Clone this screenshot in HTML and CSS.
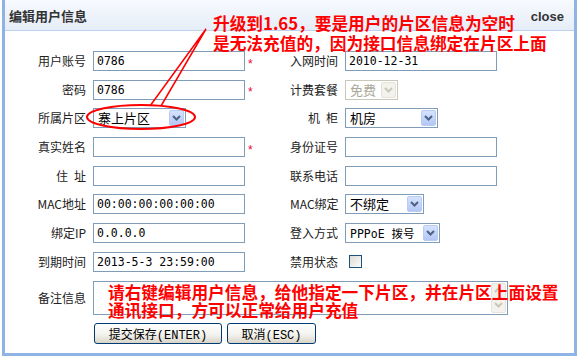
FILE: index.html
```html
<!DOCTYPE html>
<html lang="zh-CN">

<head>
  <meta charset="UTF-8">
  <meta name="viewport" content="width=device-width, initial-scale=1.0">
  <link rel="stylesheet" href="styles.css">
  <title>编辑用户信息</title>
</head>

<body>
  <div class="page">
    <div class="dialog">
      <div class="dialog-title">
        <b>编辑用户信息</b>
        <span class="close">close</span>
      </div>

      <form class="user-form">
        <!-- row: account / join date -->
        <label>用户账号</label>
        <input type="text" class="field" value="0786">
        <span class="star">*</span>
        <label>入网时间</label>
        <input type="text" class="field" value="2010-12-31">

        <!-- row: password / plan -->
        <label>密码</label>
        <input type="text" class="field" value="0786">
        <span class="star">*</span>
        <label>计费套餐</label>
        <div class="select select-plan disabled">
          <span class="value">免费</span>
          <span class="drop"><svg width="9" height="6" viewBox="0 0 9 6"><path d="M1 1 L4.5 4.5 L8 1" /></svg></span>
        </div>

        <!-- row: area / rack -->
        <label>所属片区</label>
        <div class="select select-area">
          <span class="value">寨上片区</span>
          <span class="drop"><svg width="9" height="6" viewBox="0 0 9 6"><path d="M1 1 L4.5 4.5 L8 1" /></svg></span>
        </div>
        <span></span>
        <label>机&ensp;柜</label>
        <div class="select select-rack">
          <span class="value">机房</span>
          <span class="drop"><svg width="9" height="6" viewBox="0 0 9 6"><path d="M1 1 L4.5 4.5 L8 1" /></svg></span>
        </div>

        <!-- row: real name / id -->
        <label>真实姓名</label>
        <input type="text" class="field" value="">
        <span class="star">*</span>
        <label>身份证号</label>
        <input type="text" class="field" value="">

        <!-- row: address / phone -->
        <label>住&ensp;址</label>
        <input type="text" class="field" value="">
        <span></span>
        <label>联系电话</label>
        <input type="text" class="field" value="">

        <!-- row: mac -->
        <label>MAC地址</label>
        <input type="text" class="field" value="00:00:00:00:00:00">
        <span></span>
        <label>MAC绑定</label>
        <div class="select select-bind">
          <span class="value">不绑定</span>
          <span class="drop"><svg width="9" height="6" viewBox="0 0 9 6"><path d="M1 1 L4.5 4.5 L8 1" /></svg></span>
        </div>

        <!-- row: ip / login type -->
        <label>绑定IP</label>
        <input type="text" class="field" value="0.0.0.0">
        <span></span>
        <label>登入方式</label>
        <div class="select select-login">
          <span class="value mono">PPPoE 拨号</span>
          <span class="drop"><svg width="9" height="6" viewBox="0 0 9 6"><path d="M1 1 L4.5 4.5 L8 1" /></svg></span>
        </div>

        <!-- row: expire / disabled -->
        <label>到期时间</label>
        <input type="text" class="field" value="2013-5-3 23:59:00">
        <span></span>
        <label>禁用状态</label>
        <span class="check"></span>

        <!-- memo -->
        <label>备注信息</label>
        <div class="memo">
          <div class="scroll">
            <span class="arrow"><svg width="9" height="6" viewBox="0 0 9 6"><path d="M1 5 L4.5 1.5 L8 5" /></svg></span>
            <span class="arrow"><svg width="9" height="6" viewBox="0 0 9 6"><path d="M1 1 L4.5 4.5 L8 1" /></svg></span>
          </div>
        </div>

        <span></span>
        <div class="actions">
          <button type="submit" class="btn btn-save">提交保存(ENTER)</button>
          <button type="button" class="btn btn-cancel">取消(ESC)</button>
        </div>
      </form>
    </div>

    <!-- red notes drawn over the dialog -->
    <div class="note note-top">升级到1.65，要是用户的片区信息为空时<br>是无法充值的，因为接口信息绑定在片区上面</div>
    <div class="note note-bottom">请右键编辑用户信息，给他指定一下片区，并在片区上面设置<br>通讯接口，方可以正常给用户充值</div>

    <svg class="callout" width="579" height="357" viewBox="0 0 579 357">
      <ellipse cx="141" cy="117" rx="54" ry="12" />
      <path d="M150 106 L206 29 L161 106" />
    </svg>
  </div>
</body>

</html>
```

FILE: styles.css
```css
body {
  margin: 0;
  background-color: #fff;
  font-family: "Noto Sans CJK SC", sans-serif;
}

.page {
  position: relative;
  width: 579px;
  height: 357px;
  overflow: hidden;
}

.dialog {
  margin-left: 2px;
  width: 575px;
  height: 356px;
  box-sizing: border-box;
  border: 3px solid #8fb3e5;
  border-top: 0;
  background-color: #fff;
}

.dialog-title {
  height: 30px;
  border-bottom: 1px solid #bcd2ef;
  background: linear-gradient(#f7fafe, #e5edf8);
  display: flex;
  align-items: center;
  justify-content: space-between;
  padding: 0 10px 0 4px;
}

.dialog-title b {
  font-size: 13px;
  color: #333;
}

.close {
  font: bold 13px "Liberation Sans", Arial, sans-serif;
  color: #333;
  margin-top: 2px;
}

.user-form {
  display: grid;
  grid-template-columns: 83px 152px 45px 55px 1fr;
  row-gap: 8.7px;
  align-items: center;
  padding: 20px 0 0 5px;
}

.user-form label {
  font-size: 12px;
  line-height: 20px;
  color: #222;
  text-align: right;
  padding-right: 7px;
  white-space: nowrap;
}

.field {
  width: 152px;
  height: 20px;
  box-sizing: border-box;
  margin: 0;
  padding: 0 3px;
  border: 1px solid #7f9db9;
  background-color: #fff;
  font: 11.5px "DejaVu Sans Mono", monospace;
  color: #000;
  outline: none;
}

.star {
  color: #f0003c;
  font: 12px "Liberation Sans", sans-serif;
  line-height: 12px;
  padding: 5px 0 0 3px;
}

.select {
  justify-self: start;
  display: flex;
  align-items: center;
  height: 20px;
  box-sizing: border-box;
  padding: 1px;
  border: 1px solid #7f9db9;
  background-color: #fff;
}

.select .value {
  flex: 1;
  padding-left: 3px;
  font-size: 13px;
  line-height: 16px;
  white-space: nowrap;
}

.select .value.mono {
  font: 11.5px "DejaVu Sans Mono", "Noto Sans CJK SC", monospace;
}

.select .drop {
  width: 15px;
  height: 16px;
  box-sizing: border-box;
  border: 1px solid #b9cbf3;
  border-radius: 2px;
  background: linear-gradient(#d6e3fe, #b3c7f5);
  display: flex;
  align-items: center;
  justify-content: center;
}

.select svg path,
.scroll svg path {
  fill: none;
  stroke: #4d6185;
  stroke-width: 2;
}

.select-area,
.select-rack {
  width: 93px;
}

.select-plan {
  width: 53px;
}

.select-bind {
  width: 79px;
}

.select-login {
  width: 95px;
}

.select.disabled {
  border-color: #c9c7ba;
}

.select.disabled .value {
  color: #aca899;
}

.select.disabled .drop {
  border-color: #e3e1d8;
  background: #f3f2ec;
}

.select.disabled svg path {
  stroke: #c9c7ba;
}

.check {
  justify-self: start;
  width: 13px;
  height: 13px;
  box-sizing: border-box;
  margin-left: 4px;
  border: 1px solid #1c5180;
  background: linear-gradient(135deg, #dcdcd7, #fbfbfa);
}

.memo {
  grid-column: 2 / 6;
  width: 415px;
  height: 34px;
  box-sizing: border-box;
  padding: 1px;
  border: 1px solid #7f9db9;
  display: flex;
  justify-content: flex-end;
}

.scroll {
  width: 15px;
  display: flex;
  flex-direction: column;
  justify-content: space-between;
}

.scroll .arrow {
  height: 15px;
  box-sizing: border-box;
  border: 1px solid #e6e4da;
  border-radius: 2px;
  background: #f3f2ec;
  display: flex;
  align-items: center;
  justify-content: center;
}

.scroll svg path {
  stroke: #c9c7ba;
}

.actions {
  grid-column: 2 / 6;
  display: flex;
  gap: 5px;
  padding-left: 1px;
}

.btn {
  height: 21px;
  padding: 0;
  border: 1px solid #003c74;
  border-radius: 3px;
  background: linear-gradient(#fff, #f3f3ee 55%, #d9d4c8);
  font: 12px "Liberation Mono", "Noto Sans CJK SC", monospace;
  color: #000;
}

.btn-save {
  width: 128px;
}

.btn-cancel {
  width: 89px;
}

.note {
  position: absolute;
  color: #f00;
  font-weight: bold;
  font-size: 16.7px;
  white-space: nowrap;
}

.note-top {
  left: 213px;
  top: 13px;
  line-height: 20px;
}

.note-bottom {
  left: 108px;
  top: 284px;
  line-height: 17.5px;
}

.callout {
  position: absolute;
  left: 0;
  top: 0;
  pointer-events: none;
}

.callout ellipse,
.callout path {
  fill: none;
  stroke: #f00;
}

.callout ellipse {
  stroke-width: 2;
}

.callout path {
  stroke-width: 1.5;
}
```
